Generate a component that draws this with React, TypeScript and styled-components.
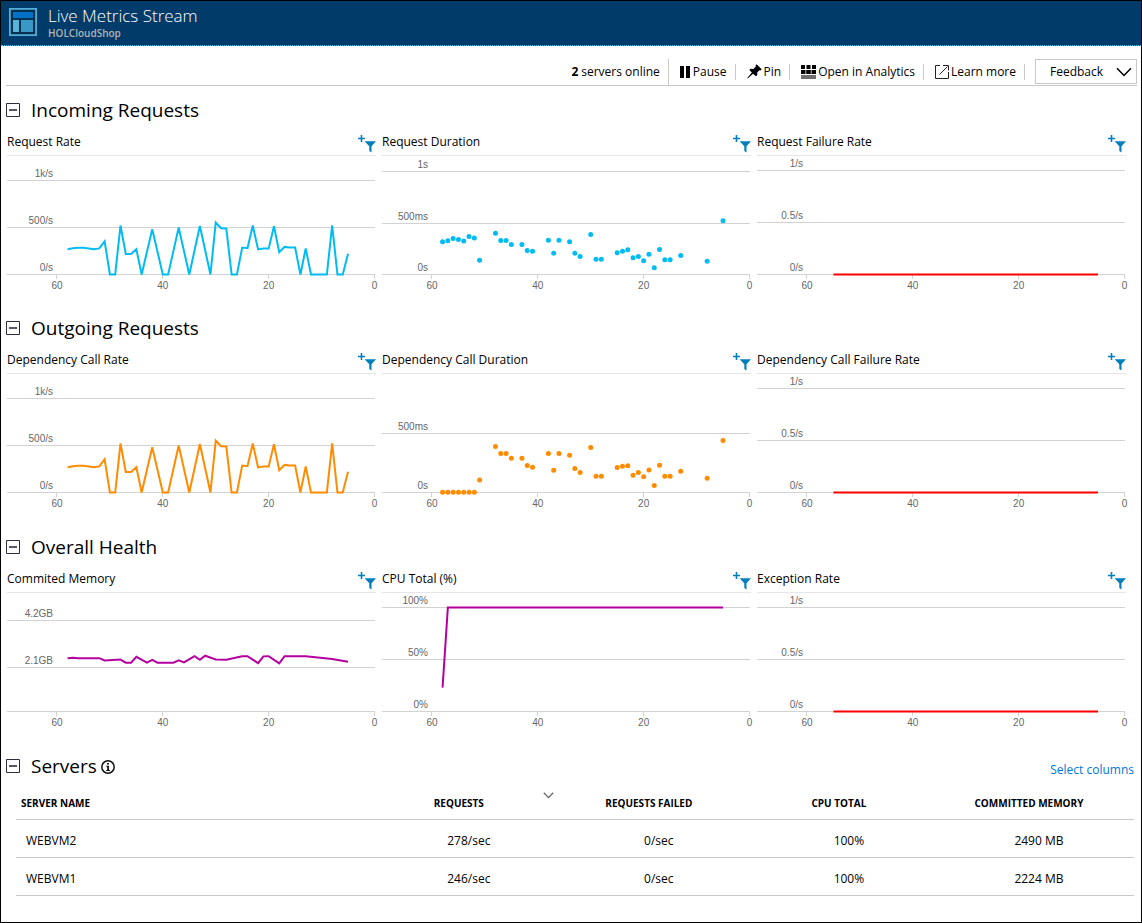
import React, { useState } from "react";
import styled, { createGlobalStyle } from "styled-components";

type Point = [number, number];

interface ChartSpec {
  title: string;
  kind: "line" | "dots";
  color: string;
  grid: { y: number; label?: string }[];
  base: number;
  scale: number;
  data: Point[];
}

const colors = {
  ink: "#000000",
  header: "#003b69",
  rule: "#c8c8c8",
  grid: "#d2d2d2",
  label: "#666666",
  accent: "#007fbc",
  link: "#0078d7",
  incoming: "#00bcf2",
  outgoing: "#ff8c00",
  health: "#b4009e",
  failure: "#ff0000",
};

const AXIS_Y = 118;

const rate: Point[] = [
  [58, 268], [57, 278], [56, 282], [55, 282], [54, 275], [53, 268], [52, 276], [51, 352],
  [50, 0], [49, 0], [48, 518], [47, 218], [46, 218], [45, 268], [44, 0], [42, 479],
  [40, 0], [39, 0], [37, 497], [35, 0], [33, 514], [31, 0], [30, 550], [29, 489],
  [28, 486], [27, 0], [26, 0], [25, 285], [24, 278], [23, 518], [22, 266], [21, 275],
  [20, 274], [19, 511], [18, 236], [17, 292], [16, 286], [15, 286], [14, 0], [13, 275],
  [12, 0], [9, 0], [8, 520], [7, 0], [6, 0], [5, 220],
];

const requestDuration: Point[] = [
  [58, 316], [57, 326], [56, 348], [55, 339], [54, 323], [53, 368], [52, 352], [51, 139],
  [48, 400], [47, 329], [46, 329], [45, 290], [43, 290], [42, 232], [41, 226], [38, 332],
  [37, 206], [36, 332], [34, 316], [33, 206], [32, 174], [30, 387], [29, 148], [28, 148],
  [25, 210], [24, 226], [23, 239], [22, 161], [21, 174], [20, 132], [19, 197], [18, 65],
  [17, 242], [16, 142], [15, 142], [13, 184], [8, 129], [5, 519],
];

const dependencyDuration: Point[] = [
  [58, 2], [57, 2], [56, 2], [55, 2], [54, 2], [53, 2], [52, 2], [51, 106],
  [48, 386], [47, 328], [46, 328], [45, 288], [43, 288], [42, 227], [41, 213], [38, 328],
  [37, 188], [36, 328], [34, 314], [33, 202], [32, 168], [30, 378], [29, 137], [28, 137],
  [25, 210], [24, 221], [23, 224], [22, 146], [21, 168], [20, 132], [19, 190], [18, 59],
  [17, 230], [16, 137], [15, 137], [13, 179], [8, 120], [5, 437],
];

const memory: Point[] = [
  [58, 2.51], [57, 2.53], [56, 2.51], [52, 2.51], [51, 2.41], [48, 2.45], [47, 2.31],
  [46, 2.31], [45, 2.57], [43, 2.31], [42, 2.43], [41, 2.31], [38, 2.31], [37, 2.41],
  [36, 2.32], [34, 2.6], [33, 2.44], [32, 2.62], [30, 2.45], [28, 2.44], [25, 2.6],
  [24, 2.6], [22, 2.29], [21, 2.59], [20, 2.6], [18, 2.28], [17, 2.6], [13, 2.6],
  [8, 2.47], [5, 2.35],
];

const failures: Point[] = [[55, 0], [5, 0]];

const failureChart = (title: string): ChartSpec => ({
  title,
  kind: "line",
  color: colors.failure,
  grid: [{ y: 14, label: "1/s" }, { y: 66, label: "0.5/s" }, { y: AXIS_Y, label: "0/s" }],
  base: 0,
  scale: 104,
  data: failures,
});

const rateGrid = [{ y: 24, label: "1k/s" }, { y: 71, label: "500/s" }, { y: AXIS_Y, label: "0/s" }];

const groups: { name: string; tall?: boolean; charts: ChartSpec[] }[] = [
  {
    name: "Incoming Requests",
    charts: [
      { title: "Request Rate", kind: "line", color: colors.incoming, grid: rateGrid, base: 0, scale: 0.0945, data: rate },
      {
        title: "Request Duration",
        kind: "dots",
        color: colors.incoming,
        grid: [{ y: 15, label: "1s" }, { y: 67, label: "500ms" }, { y: AXIS_Y, label: "0s" }],
        base: 0,
        scale: 0.1034,
        data: requestDuration,
      },
      failureChart("Request Failure Rate"),
    ],
  },
  {
    name: "Outgoing Requests",
    charts: [
      { title: "Dependency Call Rate", kind: "line", color: colors.outgoing, grid: rateGrid, base: 0, scale: 0.0945, data: rate },
      {
        title: "Dependency Call Duration",
        kind: "dots",
        color: colors.outgoing,
        grid: [{ y: 59, label: "500ms" }, { y: AXIS_Y, label: "0s" }],
        base: 0,
        scale: 0.119,
        data: dependencyDuration,
      },
      failureChart("Dependency Call Failure Rate"),
    ],
  },
  {
    name: "Overall Health",
    tall: true,
    charts: [
      {
        title: "Commited Memory",
        kind: "line",
        color: colors.health,
        grid: [{ y: 27, label: "4.2GB" }, { y: 74, label: "2.1GB" }, { y: AXIS_Y }],
        base: 0.14,
        scale: 22.5,
        data: memory,
      },
      {
        title: "CPU Total (%)",
        kind: "line",
        color: colors.health,
        grid: [{ y: 14, label: "100%" }, { y: 66, label: "50%" }, { y: AXIS_Y, label: "0%" }],
        base: 0,
        scale: 1.04,
        data: [[58, 23], [57, 100], [5, 100]],
      },
      failureChart("Exception Rate"),
    ],
  },
];

const servers = [
  { name: "WEBVM2", requests: "278/sec", failed: "0/sec", cpu: "100%", memory: "2490 MB" },
  { name: "WEBVM1", requests: "246/sec", failed: "0/sec", cpu: "100%", memory: "2224 MB" },
];

const GlobalStyle = createGlobalStyle`
  *, *::before, *::after { box-sizing: border-box; }
  body {
    margin: 0;
    background: #fff;
    color: ${colors.ink};
    font-family: "Open Sans", "Noto Sans", sans-serif;
    font-size: 12px;
    line-height: 16px;
  }
  svg { display: block; flex: none; }
  button { font: inherit; color: inherit; }
`;

const Blade = styled.div`
  min-height: 100vh;
  border: 1px solid #000;
`;

const BladeHeader = styled.header`
  display: flex;
  align-items: flex-start;
  gap: 11px;
  height: 45px;
  padding: 7px 8px 0;
  background: ${colors.header};
  border-bottom: 1px dotted #3cc8f4;
`;

const BladeTitles = styled.div`
  margin-top: -3px;
`;

const BladeTitle = styled.h1`
  margin: 0;
  font-size: 17px;
  font-weight: 300;
  line-height: 22px;
  color: #fff;
`;

const BladeSubtitle = styled.p`
  margin: 0;
  font-size: 10px;
  font-weight: 600;
  line-height: 13px;
  color: #b4b4b4;
`;

const Toolbar = styled.div`
  display: flex;
  justify-content: flex-end;
  align-items: center;
  height: 40px;
  margin: 0 4px 0 5px;
  padding-top: 12px;
  border-bottom: 1px solid ${colors.rule};
`;

const ServerCount = styled.span`
  display: flex;
  align-items: center;
  gap: 3px;
  height: 26px;
  padding-right: 8px;
  border-right: 1px solid ${colors.rule};
`;

const Command = styled.button`
  display: flex;
  align-items: center;
  gap: 2px;
  height: 16px;
  padding: 0 8px 0 11px;
  border: 0;
  border-right: 1px solid ${colors.rule};
  background: none;
  white-space: nowrap;
`;

const CommandLink = styled(Command).attrs({ as: "a", href: "#learn-more" })`
  text-decoration: none;
  color: inherit;
`;

const FeedbackButton = styled.button`
  display: flex;
  align-items: center;
  justify-content: space-between;
  width: 102px;
  height: 25px;
  margin-left: 10px;
  padding: 0 4px 0 14px;
  border: 1px solid ${colors.rule};
  background: #fff;
`;

const GroupHeader = styled.div<{ $tall?: boolean }>`
  display: flex;
  align-items: center;
  height: ${(p) => (p.$tall ? 49 : 48)}px;
  padding: 0 7px 0 5px;
`;

const GroupToggle = styled.button`
  display: block;
  padding: 0;
  border: 0;
  background: none;
`;

const GroupTitle = styled.h2`
  margin: 0 4px 0 11px;
  font-size: 19px;
  font-weight: 400;
  line-height: 26px;
`;

const ChartRow = styled.div`
  display: grid;
  grid-template-columns: repeat(3, minmax(0, 1fr));
  gap: 6px;
  margin: 0 15px 0 6px;
`;

const ChartHeader = styled.div`
  display: flex;
  justify-content: space-between;
  align-items: flex-start;
  height: 21px;
`;

const ChartTitle = styled.h3`
  margin: 0;
  font-size: 12px;
  font-weight: 400;
  line-height: 16px;
`;

const FilterButton = styled.button`
  padding: 1px 0 0;
  border: 0;
  background: none;
`;

const Plot = styled.svg`
  width: 100%;
  height: auto;
  overflow: visible;
  border-top: 1px solid #e6e6e6;
  font-family: "Liberation Sans", sans-serif;
  font-size: 10px;
`;

const SelectColumns = styled.a`
  margin-left: auto;
  padding-top: 8px;
  color: ${colors.link};
  text-decoration: none;
`;

const InfoButton = styled.button`
  padding: 2px 0 0;
  border: 0;
  background: none;
`;

const ServerTable = styled.table`
  width: calc(100% - 22px);
  margin: 0 7px 0 15px;
  table-layout: fixed;
  border-collapse: separate;
  border-spacing: 0;
`;

const HeadCell = styled.th<{ $first?: boolean }>`
  position: relative;
  width: ${(p) => (p.$first ? "32%" : "17%")};
  height: 30px;
  padding: ${(p) => (p.$first ? "0 0 4px 5px" : "0 20px 4px 0")};
  border-bottom: 1px solid ${colors.rule};
  font-size: 10px;
  font-weight: 700;
  text-align: ${(p) => (p.$first ? "left" : "center")};
  text-transform: uppercase;
`;

const SortMark = styled.svg`
  position: absolute;
  top: 2px;
  right: 10px;
`;

const Cell = styled.td<{ $first?: boolean }>`
  height: 38px;
  padding: ${(p) => (p.$first ? "4px 0 0 10px" : "4px 0 0")};
  border-bottom: 1px solid ${colors.rule};
  text-align: ${(p) => (p.$first ? "left" : "center")};
`;

const xOf = (seconds: number) => 367.5 - seconds * 5.292;

function Chart({ spec }: { spec: ChartSpec }) {
  const points = spec.data.map(([t, v]) => [xOf(t), AXIS_Y + 0.5 - (v - spec.base) * spec.scale]);
  return (
    <section>
      <ChartHeader>
        <ChartTitle>{spec.title}</ChartTitle>
        <FilterButton aria-label={`Filter ${spec.title}`}>
          <svg width="18" height="18" viewBox="0 0 18 18">
            <path d="M0 3.500h7M3.500 0v7" stroke={colors.accent} strokeWidth="1.600" />
            <path d="M6.600 6.300h11.400l-4.500 5v6.200l-2.200-1.600v-4.600z" fill={colors.accent} />
          </svg>
        </FilterButton>
      </ChartHeader>
      <Plot viewBox="0 0 369 148" role="img" aria-label={spec.title}>
        {spec.grid.map((line) => (
          <g key={line.y}>
            <path d={`M0 ${line.y + 0.5}H368`} stroke={colors.grid} />
            {line.label && (
              <text x="46" y={line.y - 3} textAnchor="end" fill={colors.label}>
                {line.label}
              </text>
            )}
          </g>
        ))}
        {[60, 40, 20, 0].map((t) => (
          <g key={t}>
            <path d={`M${Math.floor(xOf(t)) + 0.5} ${AXIS_Y}v5`} stroke={colors.grid} />
            <text x={xOf(t)} y={AXIS_Y + 15} textAnchor="middle" fill={colors.label}>
              {t}
            </text>
          </g>
        ))}
        {spec.kind === "line" ? (
          <polyline
            points={points.map((p) => p.join(",")).join(" ")}
            fill="none"
            stroke={spec.color}
            strokeWidth="2"
          />
        ) : (
          points.map(([x, y]) => <circle key={x} cx={x} cy={y} r="2.5" fill={spec.color} />)
        )}
      </Plot>
    </section>
  );
}

function Toggle({ name, open, onToggle }: { name: string; open: boolean; onToggle: () => void }) {
  return (
    <GroupToggle aria-label={name} aria-expanded={open} onClick={onToggle}>
      <svg width="14" height="14" viewBox="0 0 14 14" fill="none">
        <path d="M.5 .5h13v13H.5z" stroke="#2b2e3b" />
        <path d="M3 7h8" stroke="#2b2e3b" strokeWidth="1.6" />
        {!open && <path d="M7 3v8" stroke="#2b2e3b" strokeWidth="1.6" />}
      </svg>
    </GroupToggle>
  );
}

function ChartGroup({ name, tall, charts }: { name: string; tall?: boolean; charts: ChartSpec[] }) {
  const [open, setOpen] = useState(true);
  return (
    <section>
      <GroupHeader $tall={tall}>
        <Toggle name={name} open={open} onToggle={() => setOpen(!open)} />
        <GroupTitle>{name}</GroupTitle>
      </GroupHeader>
      {open && (
        <ChartRow>
          {charts.map((spec) => (
            <Chart key={spec.title} spec={spec} />
          ))}
        </ChartRow>
      )}
    </section>
  );
}

function Servers() {
  const [open, setOpen] = useState(true);
  return (
    <section>
      <GroupHeader $tall>
        <Toggle name="Servers" open={open} onToggle={() => setOpen(!open)} />
        <GroupTitle>Servers</GroupTitle>
        <InfoButton aria-label="About servers">
          <svg width="14" height="14" viewBox="0 0 14 14" fill="none">
            <circle cx="7" cy="7" r="6.2" stroke="#111" strokeWidth="1.5" />
            <path d="M6 3h2v1.6H6zM5.2 5.8H8v4.2h1v1H5.2v-1h1V6.8h-1z" fill="#111" />
          </svg>
        </InfoButton>
        <SelectColumns href="#columns">Select columns</SelectColumns>
      </GroupHeader>
      {open && (
        <ServerTable>
          <thead>
            <tr>
              <HeadCell $first>Server name</HeadCell>
              <HeadCell aria-sort="descending">
                Requests
                <SortMark width="11" height="7" viewBox="0 0 11 7" fill="none">
                  <path d="M.8 .8l4.7 4.8L10.200 .8" stroke="#666" strokeWidth="1.3" />
                </SortMark>
              </HeadCell>
              <HeadCell>Requests failed</HeadCell>
              <HeadCell>CPU total</HeadCell>
              <HeadCell>Committed memory</HeadCell>
            </tr>
          </thead>
          <tbody>
            {servers.map((s) => (
              <tr key={s.name}>
                <Cell $first>{s.name}</Cell>
                <Cell>{s.requests}</Cell>
                <Cell>{s.failed}</Cell>
                <Cell>{s.cpu}</Cell>
                <Cell>{s.memory}</Cell>
              </tr>
            ))}
          </tbody>
        </ServerTable>
      )}
    </section>
  );
}

export default function App() {
  return (
    <>
      <GlobalStyle />
      <Blade>
        <BladeHeader>
          <svg width="28" height="28" viewBox="0 0 28 28">
            <path d="M.9 .9h26.200v26.200H.9z" fill="#0a3050" stroke="#50b0da" strokeWidth="1.8" />
            <path d="M4 4h20v6H4z" fill="#0072c6" />
            <path d="M4 12h6v12H4z" fill="#59b4d9" />
            <path d="M12 12h12v12H12z" fill="#3999c6" />
          </svg>
          <BladeTitles>
            <BladeTitle>Live Metrics Stream</BladeTitle>
            <BladeSubtitle>HOLCloudShop</BladeSubtitle>
          </BladeTitles>
        </BladeHeader>
        <Toolbar>
          <ServerCount>
            <b>2</b> servers online
          </ServerCount>
          <Command>
            <svg width="11" height="14" viewBox="0 0 11 14">
              <path d="M0 1h4v12H0zM6 1h4v12H6z" />
            </svg>
            Pause
          </Command>
          <Command>
            <svg width="15" height="15" viewBox="0 0 15 15">
              <path d="M9.600 .3L14.700 5.200L13.500 6.400L12.400 6.200L10.200 8.500L10.300 11L9 12.300L6 9.700L.8 14.600L.3 14.100L4.900 8.600L2.300 6L3.600 4.700L6.400 4.900L8.900 2.600L8.500 1.500z" />
            </svg>
            Pin
          </Command>
          <Command>
            <svg width="15" height="14" viewBox="0 0 15 14">
              <path d="M0 0h4v4H0zM5.500 0h4v4h-4zM11 0h4v4h-4zM0 5h4.500v4H0zM5.200 5h4.600v4H5.200zM10.500 5H15v4h-4.500z" />
              <path d="M0 10h15v4H0z" fill="#6e6e6e" />
            </svg>
            Open in Analytics
          </Command>
          <CommandLink>
            <svg width="14" height="14" viewBox="0 0 14 14" fill="none" stroke="#222">
              <path d="M5 .5H.5v13h13V7M4.500 9.500L12.500 1.500M8 .5h5.500v5" />
            </svg>
            Learn more
          </CommandLink>
          <FeedbackButton aria-haspopup="menu">
            Feedback
            <svg width="16" height="10" viewBox="0 0 16 10" fill="none">
              <path d="M1 1.200l7 7.200l7-7.200" stroke="#000" strokeWidth="1.500" />
            </svg>
          </FeedbackButton>
        </Toolbar>
        <main>
          {groups.map((g) => (
            <ChartGroup key={g.name} {...g} />
          ))}
          <Servers />
        </main>
      </Blade>
    </>
  );
}
